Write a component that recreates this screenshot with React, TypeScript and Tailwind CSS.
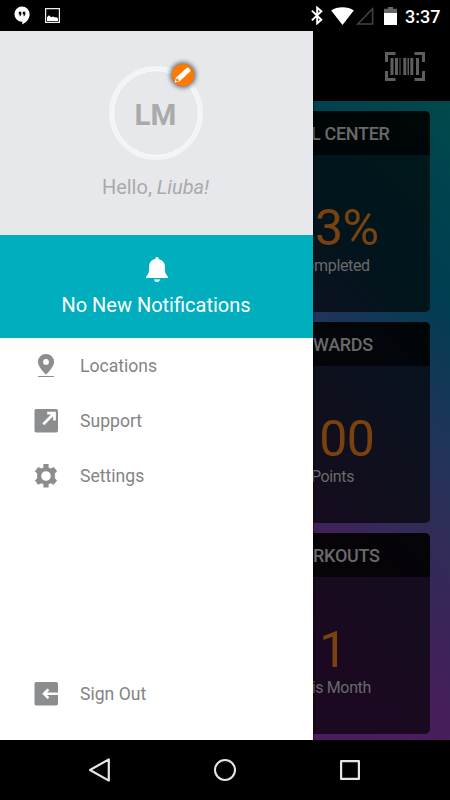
import type { ReactNode } from "react";

const cards = [
  { title: "GOAL CENTER", value: "33%", caption: "Completed" },
  { title: "REWARDS", value: "100", caption: "Points" },
  { title: "WORKOUTS", value: "1", caption: "This Month" },
];

function StatusBar() {
  return (
    <div className="flex h-[31px] shrink-0 items-center bg-black pl-[14px] pr-[10px] text-white">
      <svg width="17" height="19" viewBox="0 0 17 19" className="shrink-0">
        <path fill="#fff" d="M8 .5a7.6 7.6 0 1 0 0 15.2h.3v2.8c4.2-2 7.4-6 7.4-10.2A7.7 7.7 0 0 0 8 .5z" />
        <path fill="#000" d="M4.8 5.8h2.5v2.7L6.2 10.2H5.4l.6-1.6H4.8zM8.8 5.8h2.5v2.7l-1.1 1.7h-.8l.6-1.6H8.8z" />
      </svg>
      <svg width="15" height="15" viewBox="0 0 15 15" className="ml-[14px] shrink-0">
        <path fill="none" stroke="#eee" strokeWidth="1.2" d="M.6.6h13.8v13.8H.6z" />
        <path fill="#fff" d="M2 13V9.3l2-2 2.2 1.9 1.8-.6 2 .9 1-.6 2 1.3V13z" />
      </svg>
      <div className="ml-auto flex items-center">
        <svg width="12" height="19" viewBox="0 0 12 19">
          <path fill="none" stroke="#fff" strokeWidth="2" d="M.9 4.6l9.4 9.2-4.1 3.5V1.7l4.1 3.5L.9 14.4" />
        </svg>
        <svg width="23" height="18" viewBox="0 0 23 18" className="ml-[8px]">
          <path fill="#fff" d="M11.5 18L.2 3.4C6-.9 17-.9 22.8 3.4z" />
        </svg>
        <svg width="18" height="18" viewBox="0 0 18 18" className="ml-[2px]">
          <path fill="none" stroke="#444" strokeWidth="1.5" d="M1.7 17.1L16.6 1.7v15.4z" />
        </svg>
        <svg width="13" height="18" viewBox="0 0 13 18" className="ml-[10px]">
          <path fill="#666" d="M4 0h5v1.8h4V6H0V1.8h4z" />
          <path fill="#fff" d="M0 6h13v12H0z" />
        </svg>
        <span className="ml-[8px] w-[35px] whitespace-nowrap pt-px text-[18px] font-medium leading-[31px]">3:37</span>
      </div>
    </div>
  );
}

function Barcode() {
  return (
    <svg width="40" height="29" viewBox="0 0 40 29">
      <path
        fill="none"
        stroke="#5e5e5e"
        strokeWidth="3"
        d="M1.5 10V1.5h9M29.5 1.5h9V10M38.5 19v8.5h-9M10.5 27.5h-9V19"
      />
      <path
        fill="#5e5e5e"
        d="M5.5 6h3v17h-3zM10 6h3v17h-3zM14.5 6h1v17h-1zM18.3 6h3v17h-3zM22.5 6h1.5v17h-1.5zM25.3 6h3v17h-3zM31 6h3v17h-3z"
      />
    </svg>
  );
}

function Dashboard() {
  return (
    <div className="flex h-full flex-col">
      <div className="flex h-[70px] shrink-0 items-center justify-end bg-black pr-[25px]">
        <Barcode />
      </div>
      <div className="flex flex-1 flex-col items-end gap-[10px] bg-[linear-gradient(225deg,#00494b_0%,#003d51_19%,#20345a_32%,#2e2d57_40%,#40225a_52%,#4c1c5e_62%,#4c185c_100%)] pr-5 pt-[10px]">
        {cards.map((card) => (
          <div
            key={card.title}
            className="flex h-[201px] w-[195px] flex-col overflow-hidden rounded-[5px] bg-black/65 text-center text-[#6a6a6a]"
          >
            <h2 className="h-[44px] bg-black/70 text-[18px] font-medium leading-[46px] tracking-[-0.3px]">
              {card.title}
            </h2>
            <div className="mt-[44px] pl-px text-[50px] leading-[58px] tracking-[-0.5px] text-[#7a420e]">{card.value}</div>
            <div className="text-[16px] leading-[18px] tracking-[-0.35px]">{card.caption}</div>
          </div>
        ))}
      </div>
    </div>
  );
}

function MenuItem({ label, children }: { label: string; children: ReactNode }) {
  return (
    <div className="flex h-[55px] items-center pl-[34px] text-[17.6px] text-[#848484]">
      <svg width="24" height="24" viewBox="0 0 24 24" fill="#8b8d8f" className="mr-[22px]">
        {children}
      </svg>
      <span className="pt-[2px]">{label}</span>
    </div>
  );
}

function Drawer() {
  return (
    <aside className="absolute inset-y-0 left-0 flex w-[313px] flex-col bg-white shadow-[0_0_2px_#000]">
      <div className="flex h-[204px] flex-col items-center bg-[#e7e8ec] pr-[2px] pt-[35px] text-[#aaa]">
        <div className="relative size-[94px] rounded-full border-4 border-[#f3f4f6]">
          <div className="flex size-full items-center justify-center rounded-full border border-white pt-[5px] text-[29.5px] font-bold">
            LM
          </div>
          <div className="absolute -top-[6px] left-[59px] size-[22px] rounded-full bg-[#ff7900] shadow-[0_0_4px_2px_rgba(0,0,0,0.5)]">
            <svg width="22" height="22" viewBox="0 0 22 22">
              <path fill="#fff" d="M2.6 18.8l1.5-5.2L14.9 3.7q.7-.6 1.4.1l2 2.2q.6.7-.1 1.4L7.7 17.2z" />
              <path fill="#ff7900" d="M4.5 14.8l1.3-.5.6 1.6 1.3.3-2.8 1.5-.9-.9z" />
            </svg>
          </div>
        </div>
        <p className="mt-[14px] text-[20px] leading-[26px]">
          Hello, <em>Liuba!</em>
        </p>
      </div>

      <div className="flex h-[103px] flex-col items-center bg-[#00aebd] pr-px pt-[22px] text-white">
        <svg width="22" height="26" viewBox="0 0 22 26" className="ml-[2px]">
          <path
            fill="#fff"
            d="M9.1 2.1V2a1.9 1.9 0 0 1 3.8 0v.2c4 .9 6 3.9 6 7.5 0 5 .4 7.5 3.1 10V21H0v-1.3c2.7-2.5 3.1-5 3.1-10 0-3.6 2-6.7 6-7.6z"
          />
          <path fill="#fff" fillOpacity=".8" d="M8 22.2h6a3 2.8 0 0 1-6 0z" />
        </svg>
        <p className="mt-[10px] text-[20px] leading-6">No New Notifications</p>
      </div>

      <nav className="flex flex-1 flex-col pb-[19px]">
        <MenuItem label="Locations">
          <path fillRule="evenodd" d="M12 0a8 8 0 0 0-8.1 8.1C3.9 13 12 20.7 12 20.7s8.1-7.7 8.1-12.6A8 8 0 0 0 12 0zm0 5a2.9 2.9 0 1 1 0 5.8A2.9 2.9 0 0 1 12 5z" />
          <path d="M4 22h16v1H4z" />
        </MenuItem>
        <MenuItem label="Support">
          <rect x=".5" y="0" width="23.5" height="23.5" rx="1.8" />
          <path fill="none" stroke="#fff" strokeWidth="2.7" d="M9.3 15.2L20.2 4.3M13.2 4.2h7.3v7.2" />
        </MenuItem>
        <MenuItem label="Settings">
          <path
            fillRule="evenodd"
            d="M9.4 0h5.2v3.5l2 1.1 3.2-1.6 3.3 4.2-2.3 2.3q.3 2.4 0 4.8l2.3 2.3-3.3 4.2-3.2-1.6-2 1.1v3.2H9.4v-3.2l-2-1.1-3.2 1.6-3.3-4.2 2.3-2.3q-.3-2.4 0-4.8L.9 7.2 4.2 3l3.2 1.6 2-1.1zM12 7.2a4.8 4.8 0 1 0 0 9.6 4.8 4.8 0 0 0 0-9.6z"
          />
        </MenuItem>
        <div className="mt-auto">
          <MenuItem label="Sign Out">
            <rect x=".5" y="0" width="23.5" height="23.5" rx="1.8" />
            <path fill="none" stroke="#fff" strokeWidth="2.6" d="M24 11.8H10.2M14.4 7.4L10 11.8l4.4 4.4" />
          </MenuItem>
        </div>
      </nav>
    </aside>
  );
}

function NavBar() {
  return (
    <div className="flex h-[60px] shrink-0 items-center justify-center gap-[101px] bg-black">
      <svg width="24" height="24" viewBox="0 0 24 24" fill="none" stroke="#e6e6e6" strokeWidth="2.2" strokeLinejoin="round">
        <path d="M2 12L20.8 1.4v21.2z" />
      </svg>
      <svg width="24" height="24" viewBox="0 0 24 24" fill="none" stroke="#e6e6e6" strokeWidth="2">
        <circle cx="12" cy="12" r="10" />
      </svg>
      <svg width="24" height="24" viewBox="0 0 24 24" fill="none" stroke="#e6e6e6" strokeWidth="2.2" strokeLinejoin="round">
        <path d="M3.1 3.1h17.8v17.8H3.1z" />
      </svg>
    </div>
  );
}

export default function App() {
  return (
    <div className="flex h-[800px] w-[450px] flex-col overflow-hidden bg-black font-[Roboto,sans-serif]">
      <StatusBar />
      <main className="relative h-[709px] overflow-hidden">
        <Dashboard />
        <Drawer />
      </main>
      <NavBar />
    </div>
  );
}
